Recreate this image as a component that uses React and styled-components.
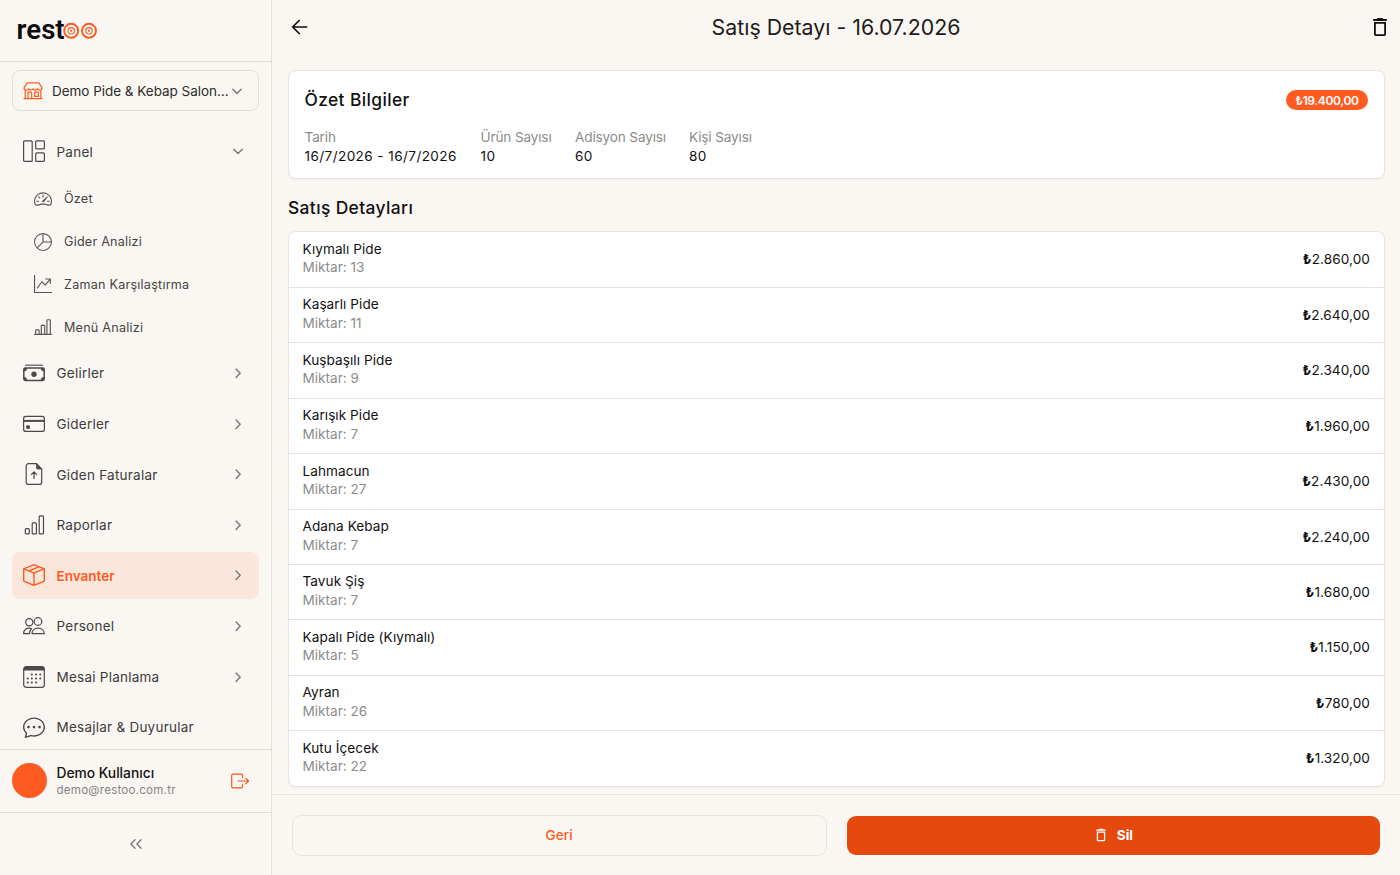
import React from "react";
import styled, { createGlobalStyle } from "styled-components";
import {
  BsSpeedometer2,
  BsPieChart,
  BsGraphUpArrow,
  BsBarChartLine,
  BsBoxSeam,
  BsChatDots,
} from "react-icons/bs";

const GlobalStyle = createGlobalStyle`
  * {
    box-sizing: border-box;
  }

  body {
    margin: 0;
    background: #faf7f2;
    font-family: Inter, "Liberation Sans", sans-serif;
    color: #111;
  }

  svg {
    flex-shrink: 0;
  }

  button {
    font-family: inherit;
    cursor: pointer;
  }
`;

const Layout = styled.div`
  display: flex;
  height: 100vh;
  overflow: hidden;
`;

const Sidebar = styled.aside`
  width: 272px;
  flex-shrink: 0;
  display: flex;
  flex-direction: column;
  border-right: 1px solid #e4e1dc;
`;

const Brand = styled.div`
  height: 62px;
  padding: 0 0 4px 16px;
  display: flex;
  align-items: center;
  border-bottom: 1px solid #e0ddd8;
`;

const Selector = styled.button`
  height: 41px;
  margin: 8px 12px 0;
  padding: 0 15px 0 9px;
  display: flex;
  align-items: center;
  flex-shrink: 0;
  border: 1px solid #e2dfda;
  border-radius: 8px;
  background: transparent;
`;

const SelectorName = styled.span`
  flex: 1;
  margin-left: 8px;
  text-align: left;
  white-space: nowrap;
  font-size: 13.5px;
  letter-spacing: -0.03px;
  color: #2c2c2c;
`;

const Nav = styled.nav`
  flex: 1;
  min-height: 0;
  overflow: hidden;
  padding: 17px 12px 0;
`;

const NavItem = styled.a`
  height: 46.6px;
  margin-bottom: 4px;
  padding: 0 15px 0 11px;
  display: flex;
  align-items: center;
  border-radius: 8px;
  background: ${(p) => (p.$active ? "#fbe6db" : "transparent")};
  color: ${(p) => (p.$active ? "#ff5a1f" : "#4a4a4a")};
`;

const NavLabel = styled.span`
  flex: 1;
  margin-left: 11.5px;
  padding-top: 0.5px;
  white-space: nowrap;
  font-size: 13.5px;
  font-weight: ${(p) => (p.$active ? 600 : 400)};
  letter-spacing: ${(p) => (p.$active ? "0" : "0.24px")};
  color: ${(p) => (p.$active ? "#ff5a1f" : "#3c3c3c")};
`;

const SubList = styled.div`
  margin: -1.2px 0 1.2px;
`;

const SubItem = styled.a`
  height: 42.8px;
  padding-left: 22px;
  display: flex;
  align-items: center;
  gap: 12px;
  font-size: 12.6px;
  letter-spacing: 0.23px;
  color: #444;
  white-space: nowrap;

  svg {
    width: 18px;
    height: 18px;
    color: #555;
  }
`;

const User = styled.div`
  height: 64px;
  flex-shrink: 0;
  padding: 0 21.5px 1px 11.5px;
  display: flex;
  align-items: center;
  border-top: 1px solid #e0ddd8;
  border-bottom: 1px solid #e0ddd8;
`;

const Avatar = styled.div`
  width: 35px;
  height: 35px;
  border-radius: 50%;
  background: #ff5a1f;
`;

const UserText = styled.div`
  flex: 1;
  margin-left: 10px;
`;

const UserName = styled.div`
  font-size: 13.8px;
  line-height: 18px;
  font-weight: 500;
`;

const UserMail = styled.div`
  font-size: 11.6px;
  line-height: 16px;
  letter-spacing: 0.22px;
  color: #858585;
`;

const Collapse = styled.div`
  height: 62px;
  flex-shrink: 0;
  display: flex;
  align-items: center;
  justify-content: center;
`;

const Main = styled.main`
  flex: 1;
  min-width: 0;
  display: flex;
  flex-direction: column;
  background: #faf6f1;
`;

const TopBar = styled.header`
  height: 54px;
  padding: 0 10px 0 18px;
  display: flex;
  align-items: center;
  justify-content: space-between;
`;

const PageTitle = styled.h1`
  margin: 0 8px 0 0;
  font-size: 21.3px;
  font-weight: 400;
  letter-spacing: 0.02px;
  color: #1c1c1c;
`;

const Content = styled.div`
  flex: 1;
  min-height: 0;
  padding: 16px 15px 0 16px;
`;

const Card = styled.section`
  background: #fff;
  border: 1px solid #e9e5de;
  border-radius: 8px;
  box-shadow: 0 1px 2px rgba(60, 40, 20, 0.06);
  overflow: hidden;
`;

const Summary = styled(Card)`
  height: 109px;
  padding: 18px 16px 0 15.5px;
`;

const SummaryHead = styled.div`
  display: flex;
  align-items: center;
  justify-content: space-between;
`;

const Heading = styled.h2`
  margin: 0;
  font-size: 17.4px;
  line-height: 22px;
  font-weight: 500;
  letter-spacing: 0.38px;
`;

const SectionHeading = styled(Heading)`
  margin: 18px 0 11.6px;
`;

const Total = styled.span`
  height: 20px;
  width: 82px;
  display: flex;
  align-items: center;
  justify-content: center;
  border-radius: 10px;
  background: #ff5a1f;
  color: #fff;
  font-size: 12px;
  font-weight: 600;
  letter-spacing: -0.35px;
`;

const Facts = styled.div`
  margin-top: 17px;
  display: flex;
`;

const Fact = styled.div`
  width: ${(p) => p.$width}px;
  font-size: 13.6px;
  line-height: 18.6px;
  white-space: nowrap;
`;

const FactLabel = styled.div`
  letter-spacing: -0.15px;
  color: #8c8c8c;
`;

const FactValue = styled.div`
  letter-spacing: 0.4px;
`;

const Row = styled.div`
  height: 55.4px;
  padding: 0 14px 0 13.5px;
  display: flex;
  align-items: center;
  justify-content: space-between;
  font-size: 13.6px;
  line-height: 18.6px;

  & + & {
    border-top: 1px solid #e6e3dd;
  }
`;

const RowText = styled.div`
  margin-top: -2.4px;
`;

const RowName = styled.div`
  letter-spacing: 0.06px;
`;

const Quantity = styled.div`
  color: #8c8c8c;
`;

const Price = styled.div`
  padding-top: 0.4px;
  letter-spacing: 0.08px;
`;

const Lira = styled.span`
  font-weight: 700;
`;

const Footer = styled.footer`
  height: 81px;
  flex-shrink: 0;
  padding: 0 20px 0 19.5px;
  display: flex;
  align-items: center;
  gap: 20px;
  border-top: 1px solid #e8e4de;
`;

const Button = styled.button`
  flex: 1;
  height: ${(p) => (p.$danger ? 39 : 41)}px;
  display: flex;
  align-items: center;
  justify-content: center;
  gap: 9px;
  border: ${(p) => (p.$danger ? "none" : "1px solid #e8e4de")};
  border-radius: 9px;
  background: ${(p) => (p.$danger ? "#e6490e" : "transparent")};
  color: ${(p) => (p.$danger ? "#fff" : "#ff5a1f")};
  font-size: 13.6px;
  font-weight: ${(p) => (p.$danger ? 700 : 500)};
`;

const Icon = ({ size = 22, children, ...rest }) => (
  <svg
    width={size}
    height={size}
    viewBox={`0 0 ${size} ${size}`}
    fill="none"
    stroke="currentColor"
    strokeWidth="1.2"
    strokeLinecap="round"
    strokeLinejoin="round"
    {...rest}
  >
    {children}
  </svg>
);

const PanelIcon = () => (
  <Icon>
    <rect x="0.6" y="0.9" width="8.6" height="20.5" rx="1" />
    <rect x="12.7" y="0.9" width="8.7" height="8" rx="1" />
    <rect x="12.7" y="12.9" width="8.7" height="8.5" rx="1" />
  </Icon>
);

const CashIcon = () => (
  <Icon>
    <path d="M2.6 3.3h16.8" strokeWidth="1.5" stroke="#777" />
    <rect x="0.8" y="6" width="20.4" height="12.4" rx="1.4" strokeWidth="1.5" />
    <circle cx="11" cy="12.3" r="2.7" fill="currentColor" stroke="none" />
    <path
      d="M1 6h3.4Q4 9.100 1 9.400ZM21 6h-3.400Q18 9.100 21 9.400ZM1 18.400h3.400Q4 15.300 1 15ZM21 18.400h-3.400Q18 15.300 21 15Z"
      fill="currentColor"
      stroke="none"
    />
  </Icon>
);

const CardIcon = () => (
  <Icon>
    <rect x="0.6" y="3.4" width="20.8" height="15" rx="2.2" />
    <path d="M1 7.900h20" strokeWidth="2" strokeLinecap="butt" />
    <rect x="3.200" y="12.300" width="3.700" height="3.600" rx="1.200" fill="currentColor" stroke="none" />
  </Icon>
);

const InvoiceIcon = () => (
  <Icon>
    <path d="M5.400.7h8.100l5.200 5.400v13.100a2.200 2.200 0 0 1-2.200 2.200H5.400a2.200 2.200 0 0 1-2.200-2.200V2.900A2.200 2.200 0 0 1 5.400.7Z" />
    <path d="M13.500.8v4.100q0 1.200 1.200 1.200h4Z" fill="currentColor" strokeWidth="0.700" />
    <path d="M11 15.500V9M8.400 11.400 11 8.900l2.600 2.500" />
  </Icon>
);

const ReportsIcon = () => (
  <Icon>
    <rect x="2.300" y="14.700" width="4" height="5.200" rx="1" />
    <rect x="9.200" y="8.900" width="4.200" height="11" rx="1" />
    <rect x="16.200" y="1.900" width="4.300" height="18" rx="1" />
  </Icon>
);

const PeopleIcon = () => (
  <Icon>
    <circle cx="6.300" cy="7.200" r="3.600" />
    <circle cx="15" cy="6.500" r="3.800" />
    <path d="M9 18.700c0-3.300 2.500-5.500 6-5.500s6.200 2.200 6.200 5.500Z" />
    <path d="M8.600 13.700c-4.600-1.700-8 1.100-8 5h5.800c0-2.100.8-3.700 2.200-5Z" />
  </Icon>
);

const CalendarIcon = () => (
  <Icon>
    <rect x="0.700" y="0.700" width="20.600" height="20.600" rx="2.600" />
    <path d="M.7 4.600V3A2.300 2.300 0 0 1 3 .7h16A2.300 2.300 0 0 1 21.300 3v1.600Z" fill="currentColor" stroke="none" />
    <path d="M8.800 8.500h.1M13 8.500h.1M17.200 8.500h.1M4.700 12.400h.1M8.800 12.400h.1M13 12.400h.1M17.200 12.400h.1M4.700 16.400h.1M8.800 16.400h.1M13 16.400h.1" strokeWidth="2" />
  </Icon>
);

const ShopIcon = () => (
  <Icon size={22} strokeWidth="1.200" color="#ff5a1f">
    <path d="M5.200 2.900h11.600l3 4.400v1.500M5.200 2.900l-3 4.400v1.500" />
    <path d="M2.200 8.800c.4 1.800 3.700 1.800 4.400 0 .6 1.800 3.800 1.800 4.400 0 .6 1.800 3.800 1.800 4.400 0 .7 1.800 4 1.800 4.400 0M3.200 10.300v8.200M18.800 10.300v8.200M2 18.700h18" />
    <path d="M6 18.500v-5.600q0-.8.800-.8h2.100q.8 0 .8.800v5.600M12.600 12.100h3.800v4.300h-3.800Z" />
  </Icon>
);

const LogoutIcon = () => (
  <Icon size={20} strokeWidth="1.200" color="#f2571f">
    <path d="M12.600 6.600V4.500q0-1.300-1.300-1.300H3q-1.300 0-1.300 1.300v11Q1.700 16.800 3 16.800h8.300q1.300 0 1.300-1.300v-2.100" />
    <path d="M8 10h10.500M15.700 7.100l2.900 2.900-2.900 2.900" />
  </Icon>
);

const Chevron = ({ down }) => (
  <Icon size={12} strokeWidth="1.400" color="#777">
    <path d={down ? "M1.800 4.200 6 8.400 10.200 4.200" : "M4 2 8.200 6.200 4 10.400"} />
  </Icon>
);

const DoubleChevron = () => (
  <Icon size={12} strokeWidth="1.300" color="#777">
    <path d="M5 1.800.9 6 5 10.200M11 1.800 6.900 6l4.100 4.200" />
  </Icon>
);

const BackIcon = () => (
  <Icon size={20} strokeWidth="1.700" color="#111">
    <path d="M17.300 10H3M9.700 3 2.700 10l7 7" strokeLinecap="butt" strokeLinejoin="miter" />
  </Icon>
);

const TrashIcon = ({ size = 20 }) => (
  <svg width={size} height={size} viewBox="0 0 20 20" fill="currentColor">
    <path
      fillRule="evenodd"
      d="M7.500 1h5l.9 1.100h3.400v1.800H3.200V2.100h3.400ZM4 5h12v12.200A1.800 1.800 0 0 1 14.200 19H5.800A1.800 1.800 0 0 1 4 17.200Zm1.800 1.800v10.400h8.400V6.800Z"
    />
  </svg>
);

const Ring = ({ cx }) => (
  <g stroke="#ff5a1f">
    <circle cx={cx} cy="19.800" r="7" strokeWidth="1.900" />
    <circle cx={cx} cy="19.800" r="3.200" strokeWidth="1.100" />
    <circle cx={cx} cy="19.800" r="1.100" fill="#ff5a1f" stroke="none" />
  </g>
);

const Logo = () => (
  <svg width="84" height="36" viewBox="0 0 84 36" fill="none">
    <text
      x="0.600"
      y="28.300"
      fontFamily="Roboto"
      fontSize="28"
      fontWeight="600"
      textLength="48"
      lengthAdjust="spacingAndGlyphs"
      fill="#0b0b0b"
    >
      rest
    </text>
    <Ring cx="55.200" />
    <Ring cx="73" />
  </svg>
);

const subItems = [
  { label: "Özet", icon: BsSpeedometer2 },
  { label: "Gider Analizi", icon: BsPieChart },
  { label: "Zaman Karşılaştırma", icon: BsGraphUpArrow },
  { label: "Menü Analizi", icon: BsBarChartLine },
];

const navItems = [
  { label: "Gelirler", icon: CashIcon },
  { label: "Giderler", icon: CardIcon },
  { label: "Giden Faturalar", icon: InvoiceIcon },
  { label: "Raporlar", icon: ReportsIcon },
  { label: "Envanter", icon: BsBoxSeam, active: true },
  { label: "Personel", icon: PeopleIcon },
  { label: "Mesai Planlama", icon: CalendarIcon },
  { label: "Mesajlar & Duyurular", icon: BsChatDots, leaf: true },
];

const facts = [
  { label: "Tarih", value: "16/7/2026 - 16/7/2026", width: 176 },
  { label: "Ürün Sayısı", value: "10", width: 94.5 },
  { label: "Adisyon Sayısı", value: "60", width: 114 },
  { label: "Kişi Sayısı", value: "80", width: 80 },
];

const sales = [
  { name: "Kıymalı Pide", count: 13, price: "2.860,00" },
  { name: "Kaşarlı Pide", count: 11, price: "2.640,00" },
  { name: "Kuşbaşılı Pide", count: 9, price: "2.340,00" },
  { name: "Karışık Pide", count: 7, price: "1.960,00" },
  { name: "Lahmacun", count: 27, price: "2.430,00" },
  { name: "Adana Kebap", count: 7, price: "2.240,00" },
  { name: "Tavuk Şiş", count: 7, price: "1.680,00" },
  { name: "Kapalı Pide (Kıymalı)", count: 5, price: "1.150,00" },
  { name: "Ayran", count: 26, price: "780,00" },
  { name: "Kutu İçecek", count: 22, price: "1.320,00" },
];

const App = () => {
  return (
    <>
      <GlobalStyle />
      <Layout>
        <Sidebar>
          <Brand>
            <Logo />
          </Brand>
          <Selector>
            <ShopIcon />
            <SelectorName>Demo Pide &amp; Kebap Salon…</SelectorName>
            <Chevron down />
          </Selector>
          <Nav>
            <NavItem>
              <PanelIcon />
              <NavLabel>Panel</NavLabel>
              <Chevron down />
            </NavItem>
            <SubList>
              {subItems.map(({ label, icon: SubIcon }) => (
                <SubItem key={label}>
                  <SubIcon />
                  {label}
                </SubItem>
              ))}
            </SubList>
            {navItems.map(({ label, icon: ItemIcon, active, leaf }) => (
              <NavItem key={label} $active={active}>
                <ItemIcon size={22} />
                <NavLabel $active={active}>{label}</NavLabel>
                {!leaf && <Chevron />}
              </NavItem>
            ))}
          </Nav>
          <User>
            <Avatar />
            <UserText>
              <UserName>Demo Kullanıcı</UserName>
              <UserMail>demo@restoo.com.tr</UserMail>
            </UserText>
            <LogoutIcon />
          </User>
          <Collapse>
            <DoubleChevron />
          </Collapse>
        </Sidebar>
        <Main>
          <TopBar>
            <BackIcon />
            <PageTitle>Satış Detayı - 16.07.2026</PageTitle>
            <TrashIcon />
          </TopBar>
          <Content>
            <Summary>
              <SummaryHead>
                <Heading>Özet Bilgiler</Heading>
                <Total>₺19.400,00</Total>
              </SummaryHead>
              <Facts>
                {facts.map((fact) => (
                  <Fact key={fact.label} $width={fact.width}>
                    <FactLabel>{fact.label}</FactLabel>
                    <FactValue>{fact.value}</FactValue>
                  </Fact>
                ))}
              </Facts>
            </Summary>
            <SectionHeading>Satış Detayları</SectionHeading>
            <Card>
              {sales.map((sale) => (
                <Row key={sale.name}>
                  <RowText>
                    <RowName>{sale.name}</RowName>
                    <Quantity>Miktar: {sale.count}</Quantity>
                  </RowText>
                  <Price>
                    <Lira>₺</Lira>
                    {sale.price}
                  </Price>
                </Row>
              ))}
            </Card>
          </Content>
          <Footer>
            <Button>Geri</Button>
            <Button $danger>
              <TrashIcon size={14} />
              Sil
            </Button>
          </Footer>
        </Main>
      </Layout>
    </>
  );
};

export default App;
